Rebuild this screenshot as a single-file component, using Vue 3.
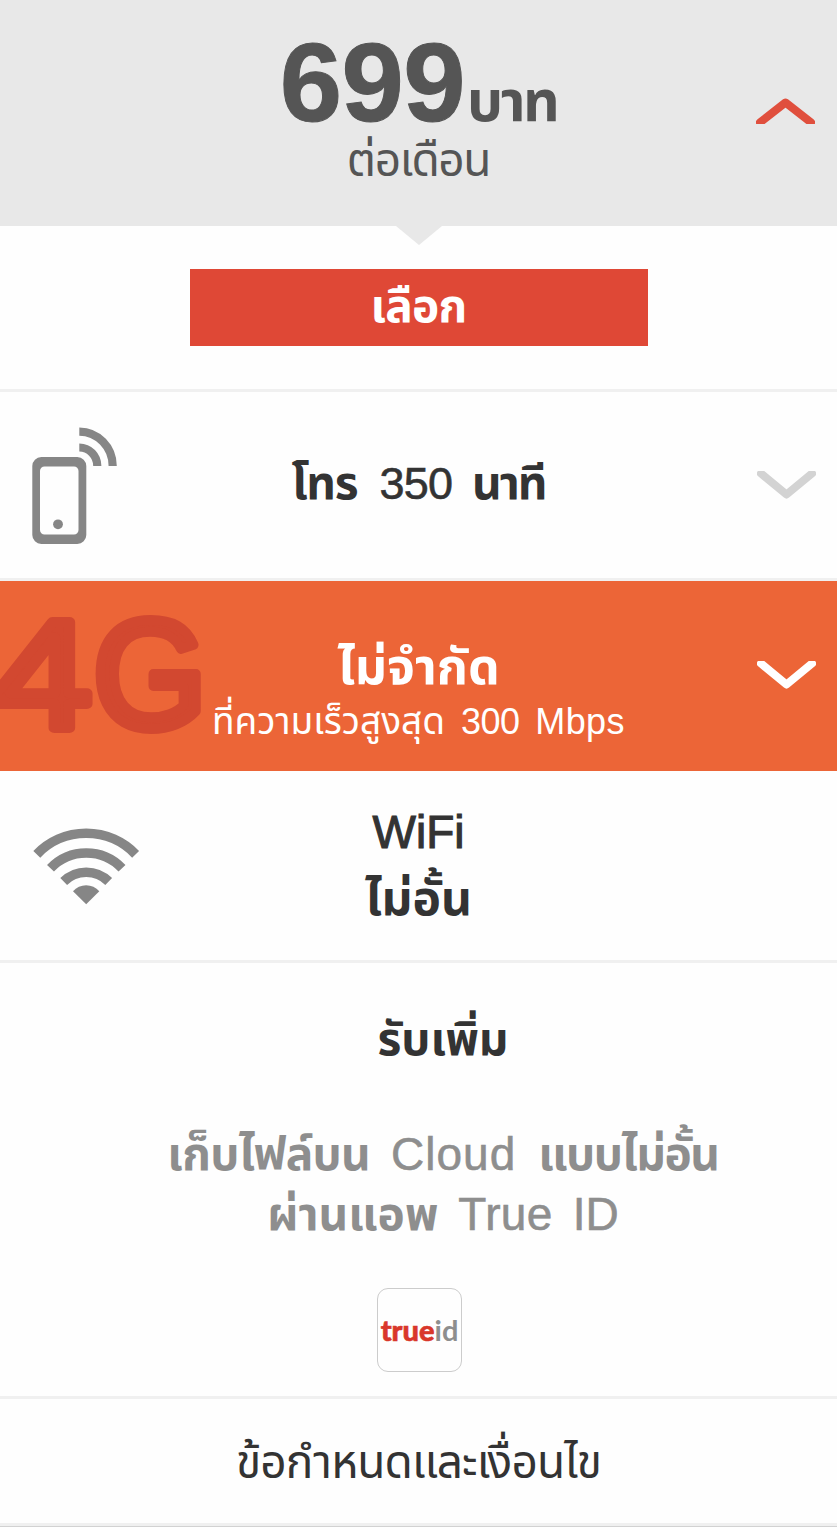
<template>
  <div class="package">
    <header class="package_head">
      <div class="price">
        <span class="price_amount">699</span><span class="price_unit">บาท</span>
      </div>
      <p class="price_period">ต่อเดือน</p>
      <svg class="chevron chevron_up" viewBox="0 0 59 26">
        <path d="M4 24.500 L29.500 4.500 L55 24.500" />
      </svg>
      <span class="pointer"></span>
    </header>

    <section class="select_row">
      <button class="select_btn">เลือก</button>
    </section>

    <section class="row call_row">
      <svg class="phone_icon" viewBox="0 0 86 118">
        <path class="body" fill-rule="evenodd" d="M9.300 31 H45.300 A9 9 0 0 1 54.300 40 V109 A9 9 0 0 1 45.300 118 H9.300 A9 9 0 0 1 .3 109 V40 A9 9 0 0 1 9.300 31 Z M12.500 40.500 A4.500 4.500 0 0 0 8 45 V104 A4.500 4.500 0 0 0 12.500 108.500 H42 A4.500 4.500 0 0 0 46.500 104 V45 A4.500 4.500 0 0 0 42 40.500 Z" />
        <circle class="body" cx="26" cy="98.300" r="4.900" />
        <path class="signal" d="M47.300 5.600 A33.500 34.500 0 0 1 80.700 40" />
        <path class="signal" d="M47.300 21.500 A18 18.500 0 0 1 65.300 40" />
      </svg>
      <p class="call_text"><b>โทร</b><span class="minutes">350</span><b class="minutes_unit">นาที</b></p>
      <svg class="chevron chevron_grey" viewBox="0 0 59 28">
        <path d="M4 2.500 L29.500 23.500 L55 2.500" />
      </svg>
    </section>

    <section class="row data_row">
      <svg class="data_mark" viewBox="0 0 210 190">
        <text x="-8" y="146.500" textLength="100" lengthAdjust="spacingAndGlyphs">4</text>
        <text x="93" y="146.500" textLength="114" lengthAdjust="spacingAndGlyphs">G</text>
      </svg>
      <div class="data_text">
        <p class="data_title">ไม่จำกัด</p>
        <p class="data_speed"><span>ที่ความเร็วสูงสุด</span><span class="speed_num">300</span><span class="speed_unit">Mbps</span></p>
      </div>
      <svg class="chevron chevron_white" viewBox="0 0 59 28">
        <path d="M4 2.500 L29.500 23.500 L55 2.500" />
      </svg>
    </section>

    <section class="row wifi_row">
      <svg class="wifi_icon" viewBox="0 0 108 78">
        <path class="arc" d="M3.800 27.300 A68.600 68.600 0 0 1 102.600 27.300" />
        <path class="arc" d="M17.500 41.200 A49.500 49.500 0 0 1 89 41.200" />
        <path class="arc" d="M30.700 54.500 A31.900 31.900 0 0 1 75.700 54.500" />
        <path class="dot" d="M53.200 77.200 L40 64.200 A17.500 17.500 0 0 1 66.300 64.200 Z" />
      </svg>
      <div class="wifi_text">
        <p class="wifi_title">WiFi</p>
        <p class="wifi_limit">ไม่อั้น</p>
      </div>
    </section>

    <section class="extra_row">
      <p class="extra_title">รับเพิ่ม</p>
      <p class="extra_line"><b class="files">เก็บไฟล์บน</b><span class="cloud">Cloud</span><b class="unlimited">แบบไม่อั้น</b></p>
      <p class="extra_line"><b>ผ่านแอพ</b><span class="app_true">True</span><span>ID</span></p>
      <div class="trueid"><b>true</b><span>id</span></div>
    </section>

    <footer class="terms">ข้อกำหนดและเงื่อนไข</footer>
  </div>
</template>

<script setup>
</script>

<style>
body {
  background-color: #fefefe;
}
</style>

<style scoped>
.package {
  width: 837px;
  height: 1527px;
  box-sizing: border-box;
  overflow: hidden;
  border-bottom: 1px solid #d2d2d2;
  font-family: "Liberation Sans", "Noto Sans Thai", sans-serif;
  color: #333;
}

p {
  margin: 0;
  white-space: nowrap;
}

.package_head {
  position: relative;
  height: 226px;
  background-color: #e8e8e8;
  color: #555;
  text-align: center;
}

.price {
  height: 135px;
  line-height: 165px;
  white-space: nowrap;
}

.price_amount {
  font-size: 112px;
  font-weight: 700;
  letter-spacing: -0.5px;
  -webkit-text-stroke: 1px #555;
}

.price_unit {
  margin-left: 2px;
  font-size: 57px;
  font-weight: 700;
  letter-spacing: -2.5px;
}

.price_period {
  font-size: 46px;
  line-height: 50px;
  letter-spacing: -1.4px;
}

.pointer {
  position: absolute;
  top: 226px;
  left: 396px;
  border: 23px solid transparent;
  border-top: 19px solid #e8e8e8;
  border-bottom: 0;
}

.chevron {
  width: 59px;
  height: 28px;
  fill: none;
  stroke-width: 8;
  stroke-linecap: round;
  stroke-linejoin: round;
}

.chevron_up {
  position: absolute;
  top: 98px;
  left: 756px;
  height: 26px;
  stroke: #e04f3d;
}

.chevron_grey {
  stroke: #d3d3d3;
}

.chevron_white {
  margin-bottom: 3px;
  stroke: #fff;
}

.select_row {
  display: flex;
  justify-content: center;
  height: 163px;
  padding-top: 43px;
  box-sizing: border-box;
}

.select_btn {
  width: 458px;
  height: 77px;
  padding: 0;
  border: 0;
  background-color: #df4836;
  color: #fff;
  font-family: inherit;
  font-size: 46px;
  font-weight: 700;
  letter-spacing: -0.7px;
}

.row {
  display: grid;
  grid-template-columns: 210px 1fr 210px;
  align-items: center;
  box-sizing: border-box;
}

.row .chevron {
  justify-self: end;
  margin-right: 21px;
}

.call_row {
  height: 192px;
  border-top: 3px solid #f0f0f0;
  border-bottom: 3px solid #f0f0f0;
}

.phone_icon {
  width: 86px;
  height: 118px;
  margin-left: 32px;
}

.body {
  fill: #868686;
}

.signal {
  fill: none;
  stroke: #868686;
  stroke-width: 8.2;
}

.call_text,
.extra_line,
.data_speed {
  display: flex;
  justify-content: center;
  align-items: baseline;
  font-size: 46px;
}

.call_text b {
  letter-spacing: -1.2px;
}

.minutes {
  margin: 0 20px 0 22px;
  font-size: 45px;
  letter-spacing: -0.8px;
  -webkit-text-stroke: 0.6px #333;
}

.call_text .minutes_unit {
  letter-spacing: -2px;
}

.data_row {
  height: 190px;
  background-color: #ec6537;
  color: #fff;
}

.data_mark {
  width: 210px;
  height: 190px;
}

.data_mark text {
  font-size: 154px;
  fill: #d24830;
  stroke: #d24830;
  stroke-width: 10;
  stroke-linejoin: round;
}

.data_text,
.wifi_text {
  text-align: center;
}

.data_text {
  padding-top: 38px;
}

.data_title {
  font-size: 50px;
  font-weight: 700;
  line-height: 54px;
}

.data_speed {
  font-size: 37px;
  line-height: 56px;
}

.speed_num {
  margin: 0 16px;
  font-size: 36px;
  letter-spacing: -0.6px;
}

.speed_unit {
  font-size: 36px;
  letter-spacing: 0.4px;
}

.wifi_row {
  height: 192px;
  border-bottom: 3px solid #f0f0f0;
}

.wifi_icon {
  width: 108px;
  height: 78px;
  margin-left: 33px;
}

.arc {
  fill: none;
  stroke: #868686;
  stroke-width: 9.6;
}

.dot {
  fill: #868686;
}

.wifi_text {
  font-size: 46px;
  line-height: 67px;
}

.wifi_title {
  -webkit-text-stroke: 1.1px #333;
}

.wifi_limit {
  font-size: 48px;
  font-weight: 700;
  line-height: 66px;
}

.extra_row {
  display: flex;
  flex-direction: column;
  align-items: center;
  height: 436px;
  box-sizing: border-box;
  border-bottom: 3px solid #f0f0f0;
}

.extra_title {
  height: 161px;
  padding-left: 49px;
  font-size: 46px;
  font-weight: 700;
  line-height: 153px;
}

.extra_line {
  height: 60px;
  padding-left: 49px;
  color: #8e8e8e;
  line-height: 60px;
}

.files {
  letter-spacing: -0.7px;
}

.cloud {
  margin: 0 22px 0 21px;
  letter-spacing: 1px;
  -webkit-text-stroke: 0.6px #8e8e8e;
}

.unlimited {
  letter-spacing: -1.4px;
}

.app_true {
  margin: 0 20px;
  letter-spacing: 0.4px;
}

.app_true,
.app_true + span {
  -webkit-text-stroke: 0.6px #8e8e8e;
}

.trueid {
  display: flex;
  justify-content: center;
  width: 83px;
  height: 82px;
  margin: 44px 0 0 2px;
  border: 1px solid #ccc;
  border-radius: 11px;
  color: #8e8e8e;
  font-family: Lato, sans-serif;
  font-size: 29px;
  font-weight: 700;
  line-height: 82px;
}

.trueid b {
  color: #d9372b;
  font-weight: 900;
  -webkit-text-stroke: 0.6px #d9372b;
}

.terms {
  height: 127px;
  box-sizing: border-box;
  border-bottom: 3px solid #f0f0f0;
  font-size: 46px;
  letter-spacing: -0.9px;
  line-height: 127px;
  text-align: center;
}
</style>
